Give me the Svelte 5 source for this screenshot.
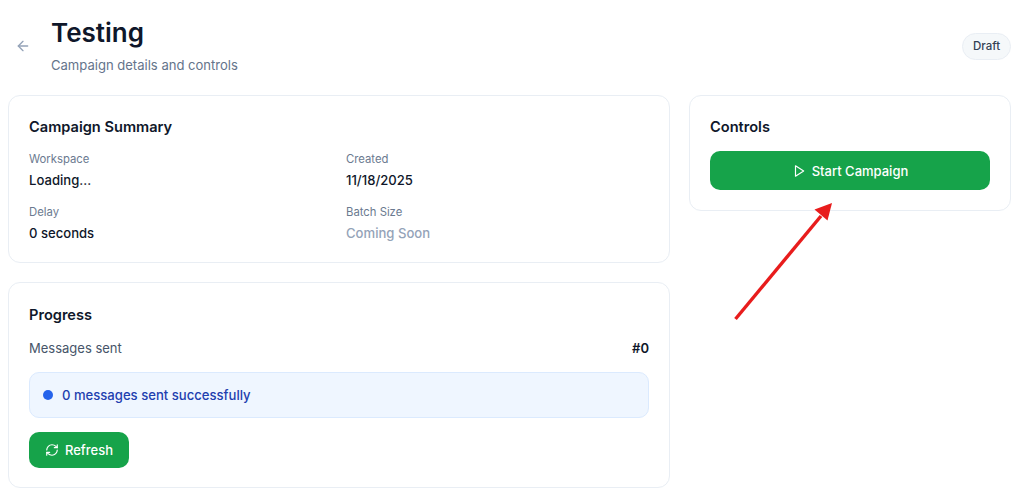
<script>
  const summary = [
    { label: 'Workspace', value: 'Loading...' },
    { label: 'Created', value: '11/18/2025' },
    { label: 'Delay', value: '0 seconds' },
    { label: 'Batch Size', value: 'Coming Soon', muted: true },
  ];
</script>

<div class="page">
  <header class="top">
    <button class="back" aria-label="Back">
      <svg width="16" height="16" viewBox="0 0 24 24"><path d="m12 19-7-7 7-7" /><path d="M19 12H5" /></svg>
    </button>
    <div class="heading">
      <h1>Testing</h1>
      <p>Campaign details and controls</p>
    </div>
    <span class="badge">Draft</span>
  </header>

  <div class="columns">
    <div class="main">
      <section class="card">
        <h2>Campaign Summary</h2>
        <div class="summary">
          {#each summary as item}
            <div>
              <div class="label">{item.label}</div>
              <div class="value" class:muted={item.muted}>{item.value}</div>
            </div>
          {/each}
        </div>
      </section>

      <section class="card progress">
        <h2>Progress</h2>
        <div class="sent">
          <span>Messages sent</span>
          <strong>#0</strong>
        </div>
        <div class="notice">
          <span class="dot"></span>
          <span>0 messages sent successfully</span>
        </div>
        <button class="btn refresh">
          <svg width="14" height="14" viewBox="0 0 24 24">
            <path d="M3 12a9 9 0 0 1 9-9 9.75 9.75 0 0 1 6.74 2.74L21 8" />
            <path d="M21 3v5h-5" />
            <path d="M21 12a9 9 0 0 1-9 9 9.75 9.75 0 0 1-6.74-2.74L3 16" />
            <path d="M8 16H3v5" />
          </svg>
          Refresh
        </button>
      </section>
    </div>

    <aside>
      <section class="card">
        <h2>Controls</h2>
        <button class="btn start">
          <svg width="14" height="14" viewBox="0 0 24 24"><polygon points="6 3 20 12 6 21 6 3" /></svg>
          Start Campaign
        </button>
      </section>
    </aside>
  </div>

  <svg class="annotation" width="1024" height="495" viewBox="0 0 1024 495">
    <line x1="735.5" y1="319" x2="821" y2="216" />
    <polygon points="832,203 814.5,209.5 827.5,220.5" />
  </svg>
</div>

<style>
  :global(body) {
    background: #fff;
  }

  .page {
    position: relative;
    height: 495px;
    overflow: hidden;
    box-sizing: border-box;
    padding: 16px 13px 0 8px;
    font-family: Inter, "Liberation Sans", sans-serif;
    color: #0f172a;
  }

  .top {
    display: flex;
    align-items: center;
    height: 59px;
    margin-bottom: 20px;
  }

  .back {
    display: flex;
    padding: 0;
    margin: 0 20px 0 7px;
    border: 0;
    background: none;
    color: #94a3b8;
  }

  .back svg,
  .btn svg {
    fill: none;
    stroke: currentColor;
    stroke-width: 2;
    stroke-linecap: round;
    stroke-linejoin: round;
  }

  .heading {
    flex: 1;
  }

  h1 {
    margin: 0;
    font-size: 26px;
    line-height: 34px;
    font-weight: 600;
  }

  .heading p {
    margin: 5px 0 1px;
    font-size: 13.05px;
    line-height: 20px;
    color: #64748b;
  }

  .badge {
    box-sizing: border-box;
    width: 49px;
    height: 27px;
    margin-top: 1px;
    border: 1px solid #e9eef4;
    border-radius: 14px;
    background: #f5f8fa;
    font-size: 11.5px;
    font-weight: 500;
    line-height: 25px;
    text-align: center;
    color: #334155;
  }

  .columns {
    display: grid;
    grid-template-columns: 662px 322px;
    gap: 19px;
    align-items: start;
  }

  .main {
    display: flex;
    flex-direction: column;
    gap: 19px;
  }

  .card {
    box-sizing: border-box;
    padding: 20px 20px 19px;
    border: 1px solid #e9eef4;
    border-radius: 12px;
    background: #fff;
  }

  .progress {
    padding-top: 21px;
  }

  h2 {
    margin: 0;
    font-size: 14.6px;
    line-height: 22px;
    font-weight: 600;
  }

  .summary {
    display: grid;
    grid-template-columns: 1fr 1fr;
    gap: 15px 14px;
    margin-top: 14px;
  }

  .label {
    font-size: 11.3px;
    line-height: 15px;
    color: #6b7a90;
  }

  .value {
    margin-top: 3px;
    font-size: 13.1px;
    line-height: 20px;
    font-weight: 500;
  }

  .value.muted {
    color: #94a3b8;
  }

  .sent {
    display: flex;
    justify-content: space-between;
    margin-top: 12px;
    font-size: 13px;
    line-height: 20px;
    color: #475569;
  }

  .sent strong {
    font-weight: 600;
    color: #0f172a;
  }

  .notice {
    display: flex;
    align-items: center;
    gap: 9px;
    height: 46px;
    box-sizing: border-box;
    margin-top: 14px;
    padding: 0 13px;
    border: 1px solid #dbeafe;
    border-radius: 10px;
    background: #eff6ff;
    font-size: 13.1px;
    font-weight: 500;
    color: #1e40af;
  }

  .dot {
    width: 10px;
    height: 10px;
    border-radius: 50%;
    background: #2563eb;
  }

  .btn {
    display: flex;
    align-items: center;
    justify-content: center;
    gap: 6px;
    border: 0;
    border-radius: 10px;
    background: #16a34a;
    color: #fff;
    font: 500 13px Inter, "Liberation Sans", sans-serif;
  }

  .refresh {
    width: 100px;
    height: 36px;
    margin-top: 14px;
  }

  .start {
    width: 100%;
    height: 39px;
    margin-top: 13px;
    margin-bottom: 1px;
  }

  .annotation {
    position: absolute;
    top: 0;
    left: 0;
    pointer-events: none;
  }

  .annotation line {
    stroke: #e81c1c;
    stroke-width: 3.4;
  }

  .annotation polygon {
    fill: #e81c1c;
  }
</style>
